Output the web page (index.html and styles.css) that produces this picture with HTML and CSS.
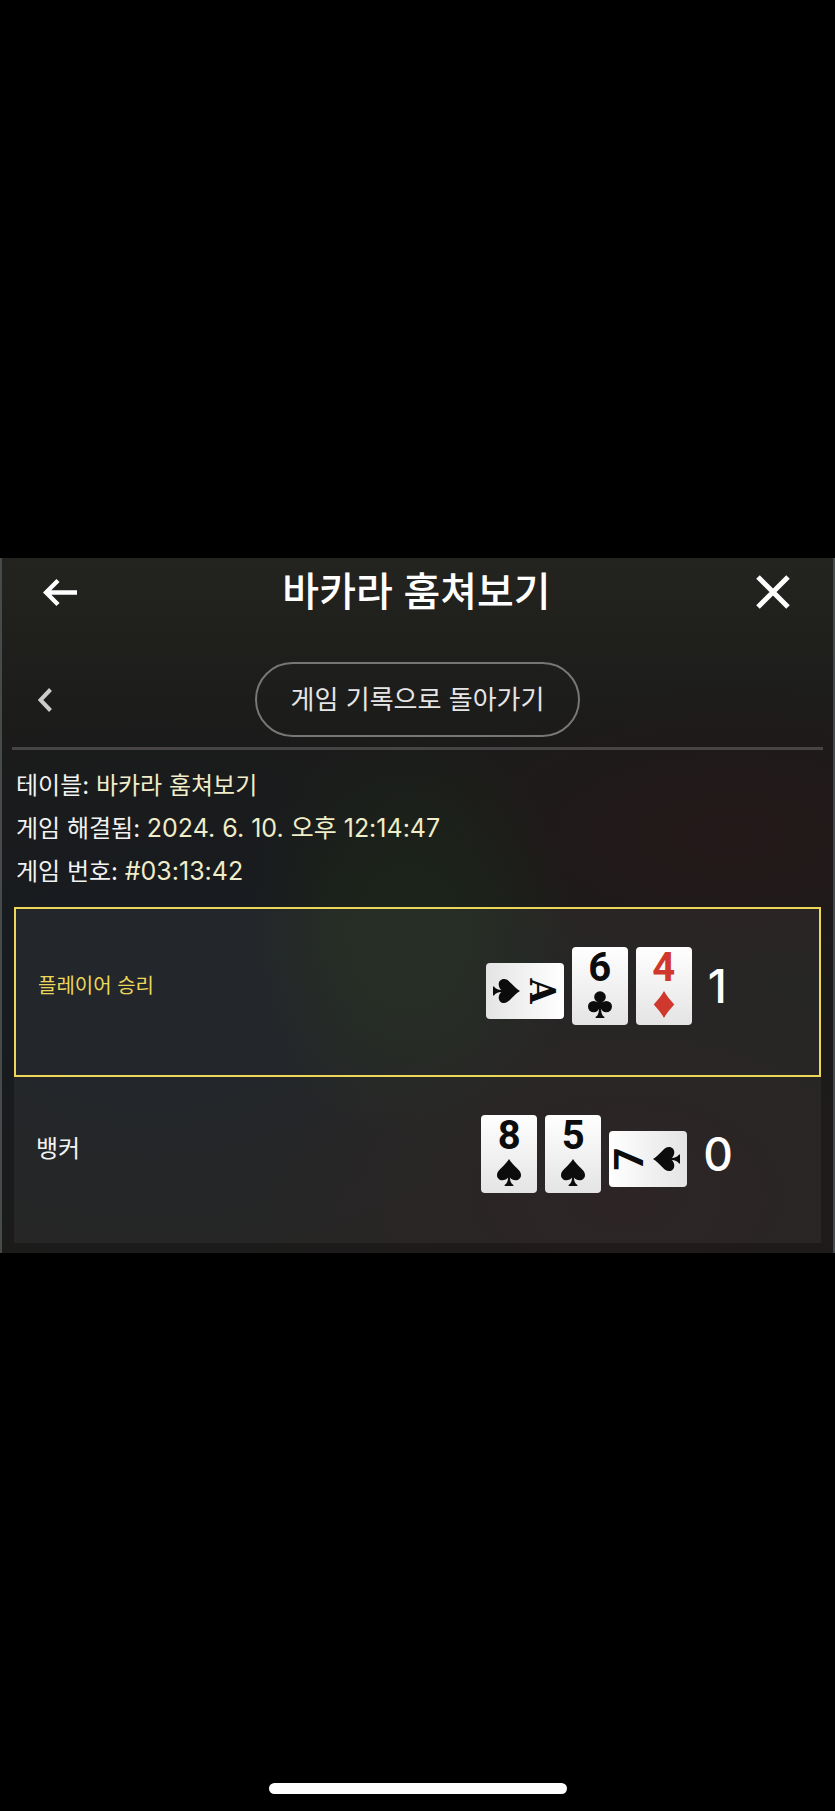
FILE: index.html
```html
<!DOCTYPE html>
<html lang="ko">
<head>
    <meta charset="UTF-8">
    <meta name="viewport" content="width=device-width, initial-scale=1.0">
    <title>바카라 훔쳐보기</title>
    <link rel="stylesheet" href="styles.css">
</head>
<body>

<!-- suit shapes shared by the cards -->
<svg class="symbols" width="0" height="0" aria-hidden="true">
    <symbol id="spade" viewBox="0 0 24 27">
        <path d="M12 0C13.5 3 17 6.2 20 9.2C22.5 11.6 24 13.3 24 16C24 19.2 21.6 21.3 18.7 21.3C16.2 21.3 14.2 20.3 12.9 18.6C13.1 22 14 24.6 16.4 26V27H7.6V26C10 24.6 10.9 22 11.1 18.6C9.8 20.3 7.8 21.3 5.3 21.3C2.4 21.3 0 19.2 0 16C0 13.3 1.5 11.6 4 9.2C7 6.2 10.5 3 12 0Z"/>
    </symbol>
    <symbol id="club" viewBox="0 0 24 27">
        <circle cx="12" cy="6" r="5.8"/>
        <circle cx="5.7" cy="15.6" r="5.7"/>
        <circle cx="18.3" cy="15.6" r="5.7"/>
        <path d="M10 10H14L16 14L12.9 17C13.1 21.5 14 24.6 16.4 26V27H7.6V26C10 24.6 10.9 21.5 11.1 17L8 14Z"/>
    </symbol>
    <symbol id="diamond" viewBox="0 0 24 27">
        <path d="M12 0C14.5 4.5 18.5 9.5 22.3 13.5C18.5 17.5 14.5 22.5 12 27C9.5 22.5 5.5 17.5 1.7 13.5C5.5 9.5 9.5 4.5 12 0Z"/>
    </symbol>
</svg>

<main class="panel">
    <header class="header">
        <button type="button" class="icon-btn" aria-label="뒤로">
            <svg width="34" height="34" viewBox="0 0 34 34"><path d="M34 17.5H3M15 5.5L3 17.5L15 29.5" stroke-width="4.4"/></svg>
        </button>
        <h1>바카라 훔쳐보기</h1>
        <button type="button" class="icon-btn" aria-label="닫기">
            <svg width="34" height="34" viewBox="0 0 34 34"><path d="M2 2L32 32M32 2L2 32" stroke-width="5"/></svg>
        </button>
    </header>

    <div class="toolbar">
        <button type="button" class="icon-btn prev" aria-label="이전">
            <svg width="14" height="24" viewBox="0 0 14 24"><path d="M12.5 1.5L2.5 12L12.5 22.5" stroke-width="4"/></svg>
        </button>
        <button type="button" class="history-btn">게임 기록으로 돌아가기</button>
    </div>

    <div class="info">
        <p>테이블: <span>바카라 훔쳐보기</span></p>
        <p>게임 해결됨: <span class="num">2024. 6. 10. 오후 12:14:47</span></p>
        <p>게임 번호: <span class="num">#03:13:42</span></p>
    </div>

    <div class="results">
        <section class="hand winner">
            <h2>플레이어 승리</h2>
            <div class="cards">
                <div class="card turn-right"><span class="rank ace">A</span><svg class="suit"><use href="#spade"/></svg></div>
                <div class="card"><span class="rank">6</span><svg class="suit"><use href="#club"/></svg></div>
                <div class="card red"><span class="rank">4</span><svg class="suit"><use href="#diamond"/></svg></div>
                <span class="score">1</span>
            </div>
        </section>
        <section class="hand">
            <h2>뱅커</h2>
            <div class="cards">
                <div class="card"><span class="rank">8</span><svg class="suit"><use href="#spade"/></svg></div>
                <div class="card"><span class="rank">5</span><svg class="suit"><use href="#spade"/></svg></div>
                <div class="card turn-left"><span class="rank">7</span><svg class="suit"><use href="#spade"/></svg></div>
                <span class="score">0</span>
            </div>
        </section>
    </div>
</main>

<footer class="home">
    <div class="home-bar"></div>
</footer>

</body>
</html>
```
FILE: styles.css
```css
* {
    box-sizing: border-box;
}
body {
    margin: 0;
    min-height: 100vh;
    display: grid;
    grid-template-rows: 1fr auto 1fr;
    background-color: #000;
    color: #f2f2f2;
    font-family: Inter, "Noto Sans CJK KR", sans-serif;
}
.symbols {
    position: absolute;
}
h1, h2, p {
    margin: 0;
}
button {
    background: none;
    border: none;
    padding: 0;
    color: inherit;
    font-family: inherit;
    cursor: pointer;
}

/* panel */
.panel {
    grid-row: 2;
    padding-bottom: 10px;
    border-left: 2px solid #454b4a;
    border-right: 2px solid #454b4a;
    background-color: #1c1b1b;
    background-image:
        radial-gradient(ellipse 20% 30% at 49% 54%, #1c231a 30%, transparent),
        radial-gradient(ellipse 40% 22% at 88% 40%, #241819, transparent),
        radial-gradient(ellipse 45% 35% at 75% 92%, #221a1a, transparent),
        radial-gradient(ellipse 50% 40% at 18% 62%, #181b20 30%, transparent),
        linear-gradient(#23231f, #1b1b1a 25%);
}
.header {
    display: flex;
    justify-content: space-between;
    align-items: center;
    height: 68px;
    padding: 0 43px 0 41px;
}
h1 {
    font-size: 40px;
    font-weight: 500;
    line-height: 48px;
    color: #fff;
}
.icon-btn {
    display: flex;
    color: #fff;
}
.icon-btn svg {
    fill: none;
    stroke: currentColor;
}
.toolbar {
    display: grid;
    grid-template-columns: 1fr auto 1fr;
    align-items: center;
    margin: 0 10px;
    padding: 36px 0 10px;
    border-bottom: 3px solid #464444;
}
.prev {
    margin-left: 26px;
    color: #ccc;
}
.history-btn {
    padding: 0 34px;
    border: 2px solid #777;
    border-radius: 38px;
    font-size: 26px;
    line-height: 71px;
    color: #e6e6e6;
}

/* round details */
.info {
    padding: 14px 14px;
    font-size: 24px;
    line-height: 43px;
}
.info span {
    color: #f0edc8;
}
.info .num {
    font-size: 25px;
}

/* hands */
.results {
    margin: 0 12px;
    background-color: rgba(255, 255, 255, 0.05);
}
.hand {
    display: grid;
    grid-template-columns: 47% 53%;
    align-items: center;
    height: 166px;
    padding-bottom: 12px;
}
.hand h2 {
    padding: 0 22px 10px;
    font-size: 24px;
    font-weight: 400;
    line-height: 36px;
}
.winner {
    height: 170px;
    border: 2px solid #ecd75a;
}
.winner h2 {
    padding-bottom: 0;
    font-size: 20px;
    color: #ecd75a;
}
.cards {
    display: flex;
    justify-content: center;
    align-items: center;
    gap: 8px;
}
.card {
    display: flex;
    flex-direction: column;
    align-items: center;
    justify-content: space-between;
    width: 56px;
    height: 78px;
    padding: 7px 0;
    border-radius: 4px;
    background-image: linear-gradient(#fff, #e4e4e4);
    color: #0c0c0c;
}
.red {
    color: #d0382e;
}
/* third card of a hand lies sideways, slightly lower than the others */
.turn-right {
    margin: 10px 11px 0;
    transform: rotate(90deg);
}
.turn-left {
    margin: 10px 11px 0;
    transform: rotate(-90deg);
}
.rank {
    font-family: Roboto, sans-serif;
    font-size: 40px;
    font-weight: 700;
    line-height: 28px;
}
.ace {
    font-family: "DejaVu Serif Condensed", "DejaVu Serif", serif;
    font-size: 36px;
}
.suit {
    width: 24px;
    height: 27px;
    fill: currentColor;
}
.score {
    margin-left: 8px;
    font-size: 46px;
    font-weight: 500;
    line-height: 56px;
    color: #fff;
}

/* home indicator */
.home {
    grid-row: 3;
    display: flex;
    justify-content: center;
    align-items: flex-end;
    padding-bottom: 17px;
}
.home-bar {
    width: 298px;
    height: 11px;
    border-radius: 6px;
    background-color: #fff;
}
```
